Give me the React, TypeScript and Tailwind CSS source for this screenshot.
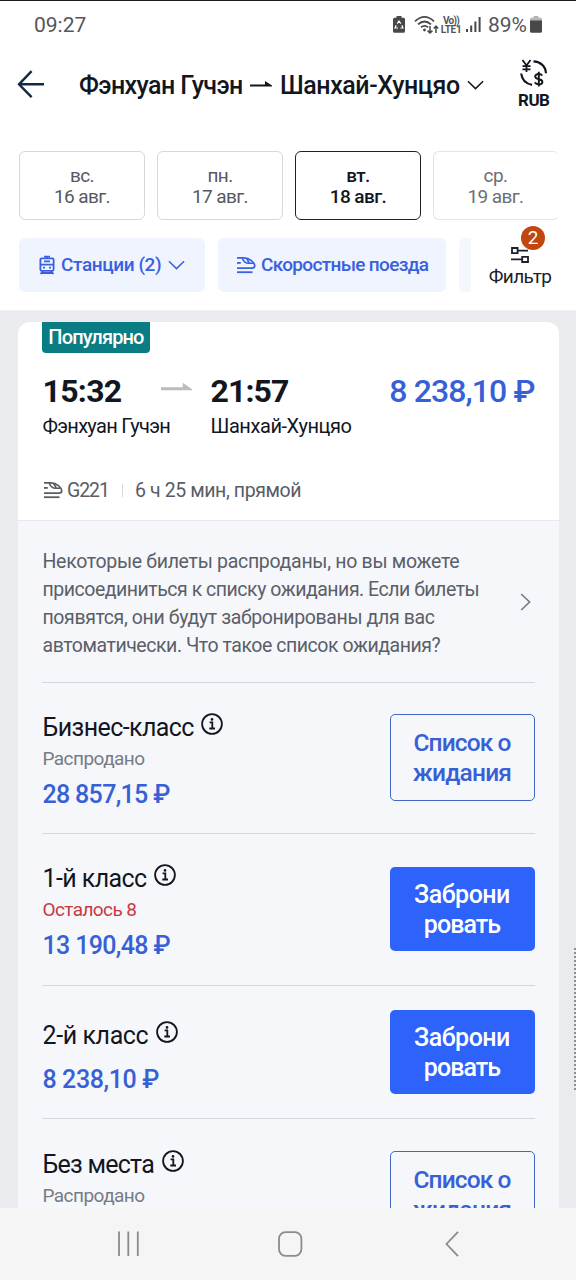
import React from "react";

type IconProps = { className?: string };

function TrainFast({ className }: IconProps) {
  return (
    <svg className={className} viewBox="0 0 20 18" fill="none" stroke="currentColor" strokeWidth="1.8">
      <path d="M1 1.8H8C13.5 1.8 18.7 6.6 18.7 9.8C18.7 11.4 17.4 12.2 15.8 12.2H1" />
      <path d="M6.2 2C7.4 5.4 9.4 7.2 12.6 7.2H17.4M10.6 2.4L13.2 7" strokeWidth="1.6" />
      <path d="M1 6.9H4.8" />
      <path d="M1 16.2H16.5" />
    </svg>
  );
}

function Tram({ className }: IconProps) {
  return (
    <svg className={className} viewBox="0 0 16 20" fill="none" stroke="currentColor" strokeWidth="1.8">
      <rect x="1.4" y="3.4" width="13.2" height="12.4" rx="1.2" />
      <path d="M5 1.6H11M8 1.6V3.4M1.4 9.6H14.6M5 6.3H11M1.5 19L4 16.2M14.5 19L12 16.2M3 18H13" />
      <path d="M4 12.7H6M10 12.7H12" />
    </svg>
  );
}

function Chevron({ className }: IconProps) {
  return (
    <svg className={className} viewBox="0 0 18 10" fill="none" stroke="currentColor" strokeWidth="1.6">
      <path d="M1 1L9 8.8L17 1" />
    </svg>
  );
}

function Info() {
  return (
    <svg className="ml-[0.5px] h-[22px] w-[22px] shrink-0" viewBox="0 0 22 22" fill="none" stroke="currentColor" strokeWidth="1.8">
      <circle cx="11" cy="11" r="9.9" />
      <path d="M8.6 9.3H11.3V15.4M8.3 15.5H14" />
      <circle cx="11" cy="6.4" r="1.3" fill="currentColor" stroke="none" />
    </svg>
  );
}

function StatusBar() {
  return (
    <div className="flex h-12 shrink-0 items-center border-t border-[#1b1a20] pl-[34px] pr-[34px] text-[#56565a]">
      <span className="flex-1 text-[21px] leading-6 tracking-[0px]">09:27</span>
      <svg className="h-[17px] w-3" viewBox="0 0 12 17">
        <path d="M3.5 0H8.5V1.8H10.5Q12 1.8 12 3.3V15.2Q12 16.7 10.5 16.7H1.5Q0 16.7 0 15.2V3.3Q0 1.8 1.5 1.8H3.5Z" fill="#48484b" />
        <path d="M4.2 7.6L6 5L7.8 7.6M8.8 9.2L10 12H7.4M5 12H2L3.2 9.2" fill="none" stroke="#fff" strokeWidth="1.2" />
      </svg>
      <svg className="ml-[9px] h-[20px] w-[25px]" viewBox="0 0 25 20" fill="none" stroke="#48484b" strokeWidth="1.8">
        <path d="M1 6.3Q10.5 -2.5 20 6.3M4 9.4Q10.5 3.6 17 9.4M7 12.3Q10.5 9.4 14 12.3" />
        <circle cx="10.5" cy="15" r="1.4" fill="#48484b" stroke="none" />
        <path d="M16 11V18M13.6 15.6L16 18L18.4 15.6M22 18V11M19.8 13.4L22 11L24.2 13.4" strokeWidth="1.5" />
      </svg>
      <span className="ml-[1px] flex w-[22px] flex-col items-center text-[10px] font-bold leading-[9px]">
        <span className="tracking-[-0.7px]">Vo))</span>
        <span className="tracking-[-0.3px]">LTE1</span>
      </span>
      <svg className="ml-[4px] h-[15px] w-[15px]" viewBox="0 0 15 15" fill="#48484b">
        <path d="M0 12H2V15H0ZM4.2 8.5H6.2V15H4.2ZM8.4 4.5H10.4V15H8.4ZM12.6 0H14.6V15H12.6Z" />
      </svg>
      <span className="ml-[7px] w-[39px] text-[21px] leading-6">89%</span>
      <svg className="ml-[3px] h-[17px] w-3" viewBox="0 0 12 17">
        <path d="M3.5 0H8.5V1.8H10.5Q12 1.8 12 3.3V5H0V3.3Q0 1.8 1.5 1.8H3.5Z" fill="#b5b5b7" />
        <path d="M0 4.5H12V15.2Q12 16.7 10.5 16.7H1.5Q0 16.7 0 15.2Z" fill="#48484b" />
      </svg>
    </div>
  );
}

function Header() {
  return (
    <header className="flex h-[103px] shrink-0 pl-[17px] text-[#12161f]">
      <svg className="mt-[22px] h-[28px] w-[28px] shrink-0 text-[#12294b]" viewBox="0 0 28 28" fill="none" stroke="currentColor" strokeWidth="2.4">
        <path d="M14.6 1.2L2 14.3L14.6 27.2M2 14.3H27" />
      </svg>
      <h1 className="ml-[34px] mt-[23px] flex h-[30px] w-[382px] shrink-0 items-center whitespace-nowrap text-[25px] font-medium leading-[30px]">
        <span className="w-[171px] tracking-[-0.6px]">Фэнхуан Гучэн</span>
        <svg className="-mt-[4px] h-[6px] w-[22px]" viewBox="0 0 22 6" fill="currentColor">
          <path d="M0 3.6H15V0L22 4.6V5.4H0Z" />
        </svg>
        <span className="ml-[8px] w-[180px] tracking-[-0.45px]">Шанхай-Хунцяо</span>
      </h1>
      <Chevron className="ml-[6px] mt-[32px] h-[10px] w-[17px] shrink-0" />
      <div className="ml-[34px] mt-[11px] flex shrink-0 flex-col items-center">
        <svg className="h-[28px] w-[28px]" viewBox="0 0 28 28" fill="none" stroke="currentColor" strokeWidth="2.2">
          <path d="M2.5 1L6.5 6.5L10.5 1M6.5 6.5V13M2.5 7.2H10.5M2.5 10.3H10.5" strokeWidth="1.8" />
          <path d="M13.5 2.3C20 2.5 25.6 7 26 14.2" />
          <path d="M1.2 14.5C1.8 20 5.6 24.6 12 25.8" />
          <path d="M22.2 16.6C21.6 15.5 20.3 15 18.8 15C16.8 15 15.2 15.9 15.2 17.5C15.2 21.4 22.4 19.2 22.4 22.9C22.4 24.4 20.8 25.4 18.8 25.4C17 25.4 15.5 24.7 15 23.3M18.8 12.8V27.6" strokeWidth="1.9" />
        </svg>
        <span className="mt-[3px] text-[17px] font-bold leading-[20px] tracking-[-0.5px]">RUB</span>
      </div>
    </header>
  );
}

const days = [
  { day: "вс.", date: "16 авг.", style: "w-[126px] border border-[#d5d8dc] rounded-[6px] text-[#56595f]" },
  { day: "пн.", date: "17 авг.", style: "w-[126px] border border-[#d5d8dc] rounded-[6px] text-[#56595f]" },
  { day: "вт.", date: "18 авг.", style: "w-[126px] border-[1.5px] border-[#1c2028] rounded-[6px] text-[#12161f] font-medium" },
  { day: "ср.", date: "19 авг.", style: "w-[126px] border border-r-0 border-[#e2e4e7] rounded-[6px] text-[#6c6f76] pr-[2px]" },
];

function Filters() {
  return (
    <div className="flex h-[90px] shrink-0 pl-[19px] pt-[18px] text-[19px] font-medium text-[#3860e0]">
      <button className="flex h-[54px] w-[186px] shrink-0 items-center rounded-[6px] bg-[#f0f4fe] pl-[20px]">
        <Tram className="h-[20px] w-[16px]" />
        <span className="ml-[6px] w-[101px] whitespace-nowrap text-left tracking-[-0.4px]">Станции (2)</span>
        <Chevron className="ml-[6px] h-[10px] w-[17px]" />
      </button>
      <button className="ml-[13px] flex h-[54px] w-[228px] shrink-0 items-center rounded-[6px] bg-[#f0f4fe] pl-[18px]">
        <TrainFast className="h-[18px] w-[20px]" />
        <span className="ml-[5px] whitespace-nowrap tracking-[-0.67px]">Скоростные поезда</span>
      </button>
      <div className="ml-[13px] h-[54px] w-[12px] shrink-0 rounded-l-[6px] bg-[#f4f7fe]" />
      <div className="relative ml-[17px] flex w-[64px] flex-col items-center pt-[9px] font-normal text-[#1c2028]">
        <svg className="h-[16px] w-[18px]" viewBox="0 0 18 16" fill="none" stroke="currentColor" strokeWidth="1.8">
          <path d="M1 1H6.6V6.2H1ZM6.6 3.6H17M11.2 9.8H17V15H11.2ZM0 12.4H11.2" />
        </svg>
        <span className="mt-[3px] text-[19px] leading-[22px] tracking-[-0.6px]">Фильтр</span>
        <span className="absolute left-[33px] top-[-12px] flex h-6 w-6 items-center justify-center rounded-full bg-[#c0480e] text-[19px] leading-6 text-white">2</span>
      </div>
    </div>
  );
}

function Trip() {
  return (
    <div className="h-[199px] rounded-t-[12px] border-b border-[#e6eaef] bg-white px-6 text-[#12161f]">
      <div className="flex h-[31px] w-[108px] items-center justify-center rounded-b-[4px] bg-[#0a7c84] pb-px text-[20px] font-medium tracking-[-0.85px] text-white">
        Популярно
      </div>
      <div className="mt-[20px] flex h-9 items-center text-[32px] leading-9">
        <span className="w-[119px] pl-[0.5px] font-bold tracking-[-0.7px]">15:32</span>
        <svg className="-mt-[9px] h-[9px] w-[31px]" viewBox="0 0 32 9" fill="#b9bcc1">
          <path d="M0 5.4H22.5V0.5L32 7.4V8.3H0Z" />
        </svg>
        <span className="ml-[18.5px] font-bold tracking-[-0.9px]">21:57</span>
        <span className="ml-auto whitespace-nowrap font-medium tracking-[-0.9px] text-[#3860d6]">8 238,10 ₽</span>
      </div>
      <div className="mt-[5px] flex h-6 items-center whitespace-nowrap pl-[0.5px] text-[20px]">
        <span className="w-[168px] tracking-[-0.7px]">Фэнхуан Гучэн</span>
        <span className="tracking-[-0.43px]">Шанхай-Хунцяо</span>
      </div>
      <div className="mt-[41px] flex h-6 items-center text-[19.5px] text-[#595d66]">
        <TrainFast className="-mt-[3px] ml-px h-[18px] w-[20px]" />
        <span className="ml-[4px] w-[55px] tracking-[-1.1px]">G221</span>
        <span className="-mt-[2px] h-[13px] w-px bg-[#d5d8dd]" />
        <span className="ml-[12px] whitespace-nowrap tracking-[-0.4px]">6 ч 25 мин, прямой</span>
      </div>
    </div>
  );
}

function Action({ waiting, top }: { waiting?: boolean; top: string }) {
  return waiting ? (
    <button className={`${top} flex h-[87px] w-[145px] shrink-0 flex-col items-center justify-center rounded-[5px] border-[1.5px] border-[#4168c8] pt-px text-[24.5px] font-medium leading-[30px] text-[#3860d6]`}>
      <span className="tracking-[-0.9px]">Список о</span>
      <span className="tracking-[-0.8px]">жидания</span>
    </button>
  ) : (
    <button className={`${top} flex h-[84px] w-[145px] shrink-0 flex-col items-center justify-center rounded-[5px] bg-[#2d62fb] pt-[1px] text-[25px] font-medium leading-[30px] text-white`}>
      <span className="tracking-[-0.5px]">Заброни</span>
      <span className="tracking-[-0.9px]">ровать</span>
    </button>
  );
}

type SeatProps = {
  name: string;
  note?: string;
  noteStyle?: string;
  price?: string;
  row: string;
  pad: string;
  nameStyle: string;
  priceStyle?: string;
  waiting?: boolean;
  top: string;
};

function Seat({ name, note, noteStyle, price, row, pad, nameStyle, priceStyle, waiting, top }: SeatProps) {
  return (
    <section className={`${row} flex justify-between border-t-[1.5px] border-[#d3d7de]`}>
      <div className={`${pad} flex flex-col whitespace-nowrap pl-[0.5px]`}>
        <div className="flex h-8 items-center text-[25px] leading-8 text-[#12161f]">
          <span className={`${nameStyle} shrink-0`}>{name}</span>
          <span className="-mt-[8px]"><Info /></span>
        </div>
        {note && <div className={`${noteStyle} -mt-px h-8 text-[19px] leading-8`}>{note}</div>}
        {price && <div className={`${priceStyle} text-[25px] font-medium leading-9 text-[#3860d6]`}>{price}</div>}
      </div>
      <Action waiting={waiting} top={top} />
    </section>
  );
}

export default function App() {
  return (
    <div className="relative flex h-[1280px] w-[576px] flex-col overflow-hidden bg-white font-['Roboto','Liberation_Sans',sans-serif]">
      <StatusBar />
      <Header />
      <div className="flex h-[69px] shrink-0 gap-3 pl-[19px]">
        {days.map((d) => (
          <button key={d.date} className={`${d.style} flex h-[69px] shrink-0 flex-col items-center justify-center pt-px text-[19px] leading-[21.5px] tracking-[-0.6px]`}>
            <span>{d.day}</span>
            <span>{d.date}</span>
          </button>
        ))}
      </div>
      <Filters />
      <main className="h-[898px] shrink-0 overflow-hidden border-t border-[#f0f1f3] bg-[#e9ebee] pl-[18px] pr-[17.5px] pt-[11px]">
        <Trip />
        <div className="bg-[#f5f7fb] px-6">
          <div className="flex h-[161px] items-start justify-between pt-[27px]">
            <p className="ml-[0.5px] whitespace-nowrap text-[19.5px] leading-7 text-[#5b5f69]">
              <span className="block tracking-[-0.3px]">Некоторые билеты распроданы, но вы можете</span>
              <span className="block tracking-[-0.48px]">присоединиться к списку ожидания. Если билеты</span>
              <span className="block tracking-[-0.38px]">появятся, они будут забронированы для вас</span>
              <span className="block tracking-[-0.45px]">автоматически. Что такое список ожидания?</span>
            </p>
            <svg className="mr-[4px] mt-[45px] h-[18px] w-[11px]" viewBox="0 0 11 18" fill="none" stroke="#747982" strokeWidth="1.6">
              <path d="M1.2 1L9.6 9L1.2 17" />
            </svg>
          </div>
          <Seat name="Бизнес-класс" nameStyle="w-[158px] tracking-[-0.58px]" note="Распродано" noteStyle="text-[#777b84] tracking-[-0.55px]" price="28 857,15 ₽" priceStyle="mt-[2px] tracking-[-0.68px]" row="h-[151px]" pad="pt-[29px]" waiting top="mt-[31px]" />
          <Seat name="1-й класс" nameStyle="w-[110.5px] tracking-[-0.58px]" note="Осталось 8" noteStyle="text-[#c73b40] tracking-[-0.6px]" price="13 190,48 ₽" priceStyle="mt-[2px] tracking-[-0.65px]" row="h-[152px]" pad="pt-[29px]" top="mt-[33px]" />
          <Seat name="2-й класс" nameStyle="w-[113px] tracking-[-0.4px]" price="8 238,10 ₽" priceStyle="mt-[10px] tracking-[-0.4px]" row="h-[133px]" pad="pt-[34px]" top="mt-[24px]" />
          <Seat name="Без места" nameStyle="w-[118.5px] tracking-[-0.75px]" note="Распродано" noteStyle="text-[#777b84] tracking-[-0.55px]" row="h-[151px]" pad="pt-[30px]" waiting top="mt-[32px]" />
        </div>
      </main>
      <nav className="flex h-[72px] shrink-0 items-center bg-[#f5f5f5] pl-[117px] text-[#8b8b8b]">
        <svg className="h-[26px] w-[23px]" viewBox="0 0 23 26" stroke="currentColor" strokeWidth="1.8">
          <path d="M2 0.5V25M11.3 0.5V25M20.8 0.5V25" />
        </svg>
        <svg className="ml-[138px] h-[26px] w-[25px]" viewBox="0 0 25 26" fill="none" stroke="currentColor" strokeWidth="1.8">
          <rect x="1" y="1.2" width="22.4" height="23.6" rx="6.5" />
        </svg>
        <svg className="ml-[142px] h-[26px] w-[14px]" viewBox="0 0 14 26" fill="none" stroke="currentColor" strokeWidth="1.8">
          <path d="M13 0.8L1.5 13L13 25.2" />
        </svg>
      </nav>
      <div className="absolute right-0 top-[948px] h-[144px] w-[2px] bg-[repeating-linear-gradient(#8d8f93_0_2px,#e9ebee_2px_4px)]" />
    </div>
  );
}
